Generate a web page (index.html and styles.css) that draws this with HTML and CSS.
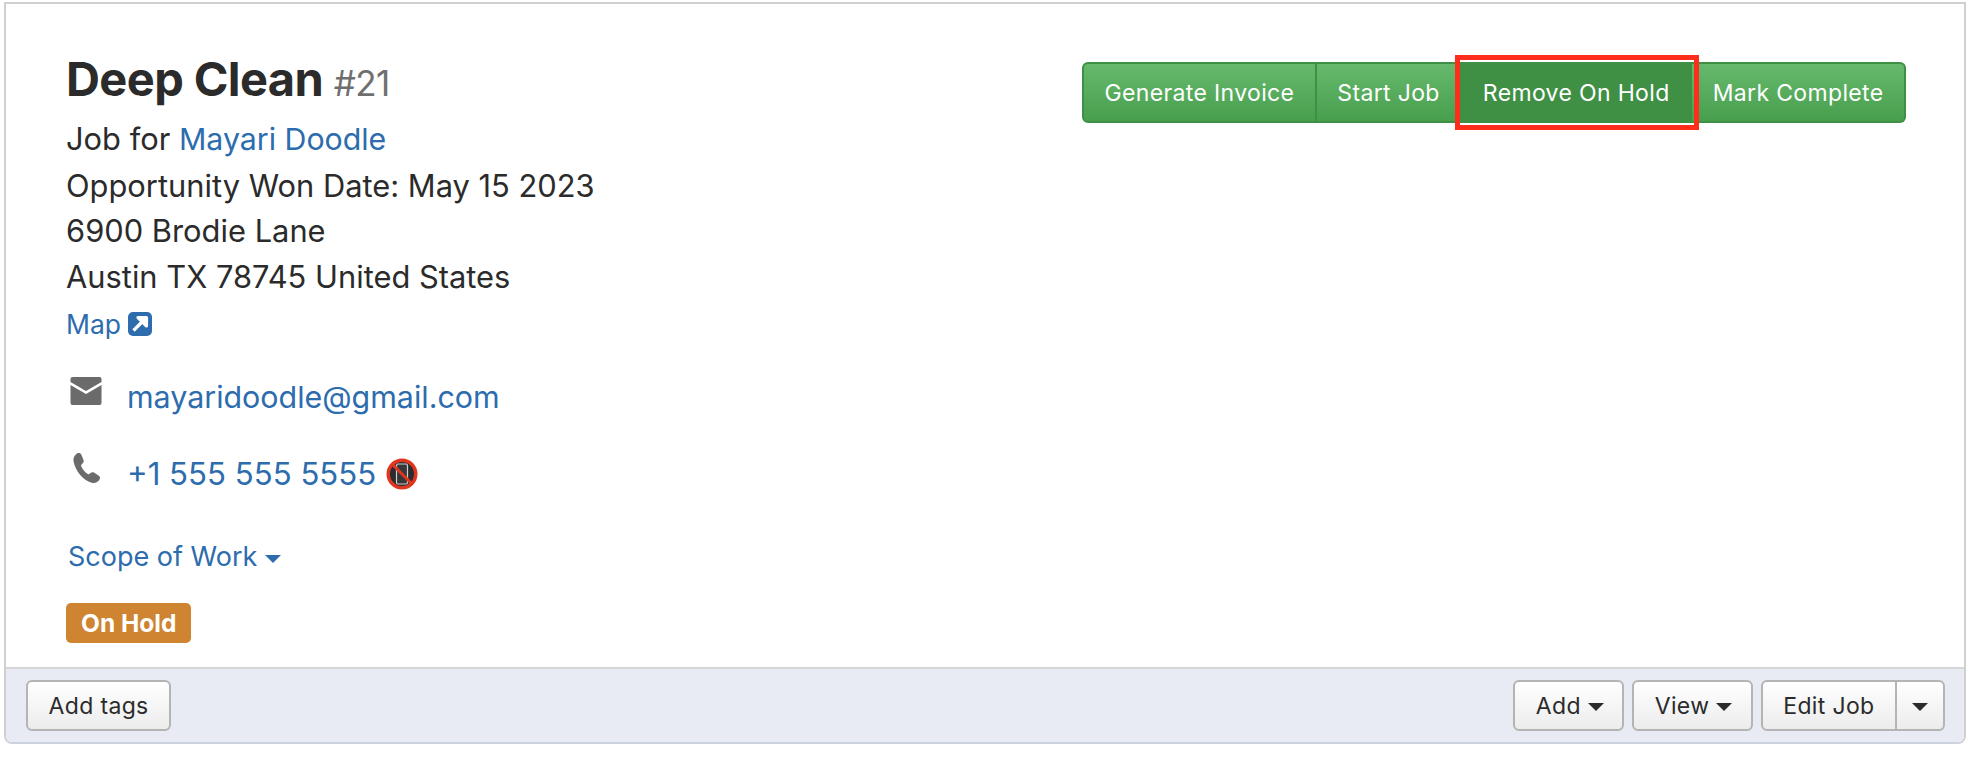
FILE: index.html
```html
<!DOCTYPE html>
<html lang="en">
<head>
    <meta charset="UTF-8">
    <meta name="viewport" content="width=device-width, initial-scale=1.0">
    <title>Deep Clean #21</title>
    <link rel="stylesheet" href="styles.css">
</head>
<body>
    <div class="job-card">
        <div class="job-body">
            <div class="job-info">
                <h1 class="job-title">Deep Clean <small>#21</small></h1>
                <div class="info-line">Job for <a class="client-link" href="#">Mayari Doodle</a></div>
                <div class="info-line">Opportunity Won Date: May 15 2023</div>
                <div class="info-line">6900 Brodie Lane</div>
                <div class="info-line">Austin TX 78745 United States</div>
                <div class="map-line">
                    <a href="#">Map</a>
                    <svg class="map-icon" viewBox="0 0 24 24" width="24" height="24">
                        <rect x="0" y="0" width="24" height="24" rx="5" fill="#2d6cad"/>
                        <path d="M5.5 18.5 L14 10 M10 5.5 H18.5 V14 Z" fill="#fff" stroke="#fff" stroke-width="3.2" stroke-linejoin="round"/>
                    </svg>
                </div>
                <div class="contact-row contact-email">
                    <svg class="contact-icon" viewBox="0 0 32 32" width="32" height="32">
                        <path d="M2.5 2 H29.5 A2 2 0 0 1 31.5 4 V7 L16 16 L.5 7 V4 A2 2 0 0 1 2.5 2 Z M.5 10 L16 19 L31.5 10 V28 A2 2 0 0 1 29.5 30 H2.5 A2 2 0 0 1 .5 28 Z" fill="#6b6b6b"/>
                    </svg>
                    <a class="email-link" href="#">mayaridoodle@gmail.com</a>
                </div>
                <div class="contact-row contact-phone">
                    <svg class="contact-icon" viewBox="0 0 32 32" width="32" height="32">
                        <path d="M7 1.5 C9 .5 10.5 1 11.5 3 L13.5 8 C14 9.5 13.5 10.5 12.5 11.5 L11 13 C11.5 16 14.5 20 18.5 22.5 L20.5 21 C21.5 20 23 20 24 20.5 L28.5 23.5 C30 24.5 30.5 26 29.5 27.5 C28 30 25.5 31.5 22.5 31 C13 29 5 18 3.5 9 C3 6 4.5 3 7 1.5 Z" fill="#6b6b6b"/>
                    </svg>
                    <a href="#">+1 555 555 5555</a>
                    <svg class="no-phone" viewBox="0 0 32 32" width="32" height="32">
                        <circle cx="16" cy="16" r="15.5" fill="#e0351f"/>
                        <circle cx="16" cy="16" r="12" fill="#2c2c2e"/>
                        <rect x="10.5" y="6" width="11" height="20" rx="1.5" fill="#38383a" stroke="#d0d0d0" stroke-width="1.2"/>
                        <path d="M7 7 L25 25" stroke="#e0351f" stroke-width="3"/>
                    </svg>
                </div>
                <div class="scope-line"><a href="#">Scope of Work <span class="caret"></span></a></div>
                <span class="status-badge">On Hold</span>
            </div>
            <div class="btn-group job-actions">
                <button class="btn btn-green">Generate Invoice</button>
                <button class="btn btn-green">Start Job</button>
                <button class="btn btn-green btn-active">Remove On Hold</button>
                <button class="btn btn-green">Mark Complete</button>
            </div>
        </div>
        <div class="job-footer">
            <button class="btn btn-default">Add tags</button>
            <div class="footer-right">
                <button class="btn btn-default">Add <span class="caret"></span></button>
                <button class="btn btn-default">View <span class="caret"></span></button>
                <div class="btn-group">
                    <button class="btn btn-default">Edit Job</button>
                    <button class="btn btn-default btn-split"><span class="caret"></span></button>
                </div>
            </div>
        </div>
    </div>
</body>
</html>
```

FILE: styles.css
```css
body {
    margin: 0;
    background: #fff;
    font-family: Inter, "Liberation Sans", sans-serif;
    color: #2b2b2b;
}
a {
    color: #2d6cad;
    text-decoration: none;
}
.job-card {
    margin: 2px 12px 0 4px;
    border: 2px solid #d0d0d0;
    border-bottom-color: #ccd2e0;
    border-radius: 0 0 8px 8px;
}
.job-body {
    display: flex;
    justify-content: space-between;
    align-items: flex-start;
    height: 663px;
    box-sizing: border-box;
    padding: 49px 58px 0 60px;
}
.job-title {
    margin: 0 0 7px;
    font-size: 47px;
    line-height: 52px;
    font-weight: 700;
    letter-spacing: -0.6px;
}
.job-title small {
    font-size: 35px;
    font-weight: 400;
    color: #6f6f6f;
}
.info-line {
    font-size: 30.85px;
    line-height: 45.5px;
}
.client-link {
    font-size: 30.3px;
}
.map-line {
    display: flex;
    align-items: center;
    gap: 7px;
    margin-top: 6px;
    font-size: 26.5px;
    line-height: 38px;
}
.contact-row {
    display: flex;
    align-items: flex-start;
    font-size: 31.2px;
    line-height: 40px;
}
.contact-row a {
    margin-right: 10px;
}
.email-link {
    font-size: 30.4px;
}
.contact-email {
    margin-top: 34px;
}
.contact-phone {
    margin-top: 37px;
}
.contact-icon {
    margin: -2px 25px 0 4px;
}
.no-phone {
    margin-top: 4px;
}
.scope-line {
    margin: 43px 0 0 2px;
    font-size: 27px;
    line-height: 40px;
}
.caret {
    display: inline-block;
    vertical-align: middle;
    border-top: 8px solid currentColor;
    border-left: 8px solid transparent;
    border-right: 8px solid transparent;
}
.status-badge {
    display: inline-block;
    margin-top: 26px;
    padding: 0 15px;
    font-size: 24.5px;
    line-height: 40px;
    font-weight: 700;
    color: #fff;
    background: #cf8431;
    border-radius: 5px;
}
.btn-group {
    display: flex;
}
.job-actions {
    margin-top: 9px;
}
.btn {
    font-family: inherit;
    font-size: 23px;
    letter-spacing: 0.35px;
    height: 61px;
    padding: 0 20.5px;
    border-radius: 6px;
    white-space: nowrap;
}
.btn-green {
    color: #fff;
    background: linear-gradient(#67b96d, #479f4d);
    border: 2px solid #3f8f45;
    border-left-width: 0;
    border-radius: 0;
}
.btn-green:first-child {
    border-left-width: 2px;
    border-radius: 6px 0 0 6px;
}
.btn-green:last-child {
    border-radius: 0 6px 6px 0;
}
.btn-active {
    background: #3f8f45;
    outline: 5px solid #ff2e1c;
    outline-offset: 2px;
    position: relative;
    z-index: 1;
}
.job-footer {
    display: flex;
    justify-content: space-between;
    align-items: center;
    height: 75px;
    box-sizing: border-box;
    padding: 0 19px 0 20px;
    background: #e8ebf3;
    border-top: 2px solid #d6d6d6;
    border-radius: 0 0 6px 6px;
}
.footer-right {
    display: flex;
    gap: 8px;
}
.btn-default {
    height: 51px;
    color: #2b2b2b;
    background: linear-gradient(#ffffff, #ececec);
    border: 2px solid #b4b4b4;
}
.btn-default .caret {
    margin-left: 0;
    margin-right: -2px;
}
.btn-group .btn-default:first-child {
    border-radius: 6px 0 0 6px;
}
.btn-split {
    padding: 0 15px;
    border-left-width: 0;
    border-radius: 0 6px 6px 0;
}
.btn-group .btn-split .caret {
    margin-right: 0;
}
```
